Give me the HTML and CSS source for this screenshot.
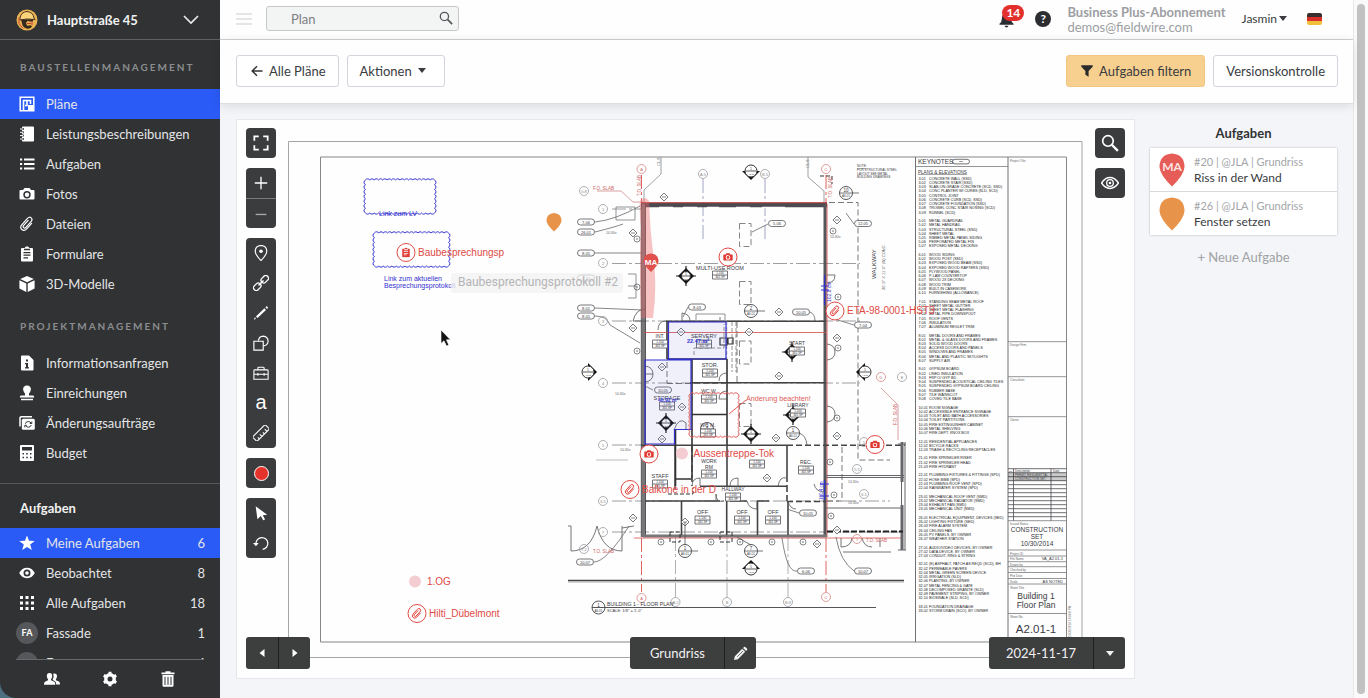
FILE: index.html
```html
<!DOCTYPE html>
<html lang="de">
<head>
<meta charset="utf-8">
<title>Grundriss – Hauptstraße 45</title>
<link rel="stylesheet" href="styles.css">
</head>
<body>
<svg class="defs" aria-hidden="true">
  <symbol id="i-clip" viewBox="0 0 16 16"><g transform="rotate(42 8 8)"><path d="M11 4.500v7.300q0 3.700-3.200 3.700t-3.200-3.700V3.500Q4.600.7 7 .7t2.400 2.800v7.700q0 1.700-1.500 1.700t-1.500-1.700V4.500" fill="none" stroke="currentColor" stroke-width="1.200" stroke-linecap="round"/></g></symbol>
  <symbol id="i-cam" viewBox="0 0 16 16"><path fill="currentColor" fill-rule="evenodd" d="M5.500 2h5L12 4h2.500q1 0 1 1v7.500q0 1-1 1h-13q-1 0-1-1V5q0-1 1-1H4zM8 5a3.700 3.700 0 1 0 0 7.400A3.700 3.700 0 0 0 8 5zm0 1.500a2.200 2.200 0 1 1 0 4.400 2.200 2.200 0 0 1 0-4.400z"/></symbol>
  <symbol id="i-board" viewBox="0 0 16 16"><path fill="currentColor" fill-rule="evenodd" d="M5.500 2 7 .5h2L10.500 2H13q1 0 1 1v11.500q0 1-1 1H3q-1 0-1-1V3q0-1 1-1zM5 2.800v1.400h6V2.800zM4.500 6v1.200h7V6zm0 2.600v1.200h7V8.600zm0 2.600v1.200H9v-1.200z"/></symbol>
  <symbol id="i-mag" viewBox="0 0 16 16"><circle cx="6.200" cy="6.200" r="4.700" fill="none" stroke="currentColor" stroke-width="1.500"/><path d="m9.700 9.700 5.300 5.300" stroke="currentColor" stroke-width="2"/></symbol>
  <symbol id="i-pencil" viewBox="0 0 16 16"><path fill="currentColor" d="M1 15l1-4.200L9.800 3 13 6.200 5.200 14zM10.700 2.100l1.100-1.100q.7-.6 1.400 0L15 2.800q.6.700 0 1.400l-1.100 1.100z"/><path d="m4.500 11.500 6-6" stroke="#3d3e3e" stroke-width=".8"/></symbol>
</svg>

<div class="app">
  <nav class="sidebar" aria-label="Projekt">
    <button class="project">
      <svg class="logo" viewBox="0 0 22 22"><circle cx="11" cy="11" r="10.500" fill="#e9b354"/><path d="M4 9q1-6 7-6.500Q17 3 18 9l1 1.500-8-.5-7 1z" fill="#fad37a" stroke="#4a3420" stroke-width="1"/><path d="M5 10.500h12v2h-4l-1-1-2 2.300 1 3 4-.5 1 1.500q-3 3-6 1.500-3.500-1-4-5z" fill="#34291f"/><path d="M3 8.500v6l4 5M11 14.500h4M16 12v4" stroke="#c2452d" fill="none"/></svg>
      <span>Hauptstraße 45</span>
      <svg class="chev" viewBox="0 0 16 10"><path d="m1 1 7 7 7-7" fill="none" stroke="#eee" stroke-width="1.600"/></svg>
    </button>
    <h2 class="group-label">BAUSTELLENMANAGEMENT</h2>
    <ul class="menu">
      <li><a class="active" href="#"><svg viewBox="0 0 16 16"><path d="M1.200 1.200h13.600v13.600H1.200z" fill="none" stroke="#fff" stroke-width="1.500"/><path d="M4.500 14V4.500h7V8M8 4.500v5H6" fill="none" stroke="#fff" stroke-width="1.600"/><path d="M9 9h5v5H9z" fill="#fff"/></svg><span>Pläne</span></a></li>
      <li><a href="#"><svg viewBox="0 0 16 16"><path d="M4 .5h10q1 0 1 1v13q0 1-1 1H4q-1 0-1-1v-13q0-1 1-1z" fill="#fff"/><path d="M.8 3h4M.8 6.300h4M.8 9.600h4M.8 13h4" stroke="#303234" stroke-width="2"/><path d="M1 3h3M1 6.300h3M1 9.600h3M1 13h3" stroke="#fff"/></svg><span>Leistungsbeschreibungen</span></a></li>
      <li><a href="#"><svg viewBox="0 0 16 16"><path d="M5 3.500h10.500M5 8h10.500M5 12.500h10.500M1 3.500h2.200M1 8h2.200M1 12.500h2.200" stroke="#fff" stroke-width="2"/></svg><span>Aufgaben</span></a></li>
      <li><a href="#"><svg><use href="#i-cam"/></svg><span>Fotos</span></a></li>
      <li><a href="#"><svg><use href="#i-clip"/></svg><span>Dateien</span></a></li>
      <li><a href="#"><svg><use href="#i-board"/></svg><span>Formulare</span></a></li>
      <li><a href="#"><svg viewBox="0 0 16 16"><path fill="#fff" d="m8 0 6.800 3L8 6.200 1.200 3zM.4 4.200 7.300 7.400V16L.4 12.600zM15.600 4.200v8.400L8.700 16V7.400z"/></svg><span>3D-Modelle</span></a></li>
    </ul>
    <h2 class="group-label">PROJEKTMANAGEMENT</h2>
    <ul class="menu">
      <li><a href="#"><svg viewBox="0 0 16 16"><path fill="#fff" fill-rule="evenodd" d="M3 .5h7L14.500 5v9.500q0 1-1 1H3q-1 0-1-1v-13q0-1 1-1zM7 4.500v2h2v-2zM6 8v1.300h1v3H6v1.200h4v-1.200H9V8z"/></svg><span>Informationsanfragen</span></a></li>
      <li><a href="#"><svg viewBox="0 0 16 16"><path fill="#fff" d="M8 .5q4 .3 3.900 4Q11.500 7 10 8.500v2h4q1.200.2 1.200 2H.8q0-1.800 1.200-2h4v-2Q4.500 7 4.100 4.500 4 .8 8 .5zM2 13.700h12v1.600H2z"/></svg><span>Einreichungen</span></a></li>
      <li><a href="#"><svg viewBox="0 0 16 16"><path d="M1 11.500V3q0-1.300 1.300-1.300H13" fill="none" stroke="#fff" stroke-width="1.500"/><rect x="2.800" y="3.800" width="13" height="11" rx="1.500" fill="#fff"/><path d="M6.300 8.700q.8-2.200 3-2.200 1.800 0 2.700 1.600M12.300 10q-.8 2.200-3 2.200-1.800 0-2.700-1.600M12.800 6.500v2h-2M5.800 12.300v-2h2" fill="none" stroke="#303234"/></svg><span>Änderungsaufträge</span></a></li>
      <li><a href="#"><svg viewBox="0 0 16 16"><path fill="#fff" fill-rule="evenodd" d="M2 0h12q1 0 1 1v14q0 1-1 1H2q-1 0-1-1V1q0-1 1-1zM3 2v3.500h10V2zM3.500 8v1.500H5V8zm3.700 0v1.500h1.600V8zM11 8v1.500h1.500V8zm-7.500 3.700v1.500H5v-1.500zm3.700 0v1.500h1.600v-1.500zm3.800 0v1.500h1.500v-1.500z"/></svg><span>Budget</span></a></li>
    </ul>
    <h2 class="tasks-title">Aufgaben</h2>
    <ul class="menu filters">
      <li><a class="active" href="#"><svg viewBox="0 0 16 16"><path fill="#fff" d="m8 .5 2 5.300 5.700.2-4.500 3.500 1.600 5.500L8 11.900 3.200 15l1.600-5.500L.3 6 6 5.800z"/></svg><span>Meine Aufgaben</span><b>6</b></a></li>
      <li><a href="#"><svg viewBox="0 0 16 16"><path fill="#fff" fill-rule="evenodd" d="M.2 8Q3 2.800 8 2.800T15.800 8Q13 13.200 8 13.200T.2 8zM8 4.500a3.500 3.500 0 1 0 0 7 3.500 3.500 0 0 0 0-7z"/><circle cx="8" cy="8" r="1.800" fill="#fff"/></svg><span>Beobachtet</span><b>8</b></a></li>
      <li><a href="#"><svg viewBox="0 0 16 16"><path stroke="#fff" stroke-width="3" stroke-dasharray="3 2.500" d="M1 2.500h14M1 8h14M1 13.500h14"/></svg><span>Alle Aufgaben</span><b>18</b></a></li>
      <li><a href="#"><i class="avatar">FA</i><span>Fassade</span><b>1</b></a></li>
      <li><a href="#"><i class="avatar">FE</i><span>Fenster</span><b>4</b></a></li>
    </ul>
    <div class="side-foot">
      <button aria-label="Personen"><svg viewBox="0 0 16 16"><path fill="#fff" d="M5.500 2Q8.300 2 8.200 5 8 7.300 7 8.300v1l3.300 1.400q1 .5 1 3H0q0-2.500 1-3l3-1.400v-1Q3 7.300 2.800 5q0-3 2.700-3zM10.500 2.500Q13 2.500 13 5.300q-.2 2-1.100 3v1l3 1.200q1.100.5 1.100 3h-3.700q0-2.800-1.700-3.600l-1.900-.8V8.500Q9.700 7 9.600 4.700 9.500 3.400 9 2.700z"/></svg></button>
      <button aria-label="Einstellungen"><svg viewBox="0 0 16 16"><circle cx="8" cy="8" r="4.200" fill="none" stroke="#fff" stroke-width="3.400"/><path d="M8 .8v3M8 12.200v3M1.800 4.400l2.500 1.500M11.700 10.100l2.500 1.500M1.800 11.600l2.500-1.500M11.700 5.900l2.500-1.500" stroke="#fff" stroke-width="3"/></svg></button>
      <button aria-label="Papierkorb"><svg viewBox="0 0 16 16"><path fill="#fff" fill-rule="evenodd" d="M5.500 1.500V.3h5v1.200h4v1.700h-13V1.500zM2.500 4h11v10.500q0 1.200-1.200 1.200H3.700q-1.200 0-1.200-1.200zm2 1.800V14h1V5.800zm3 0V14h1V5.800zm3 0V14h1V5.800z"/></svg></button>
    </div>
  </nav>

  <div class="main">
    <header class="topbar">
      <button class="burger" aria-label="Menü"><svg viewBox="0 0 16 12"><path d="M0 1h16M0 6h16M0 11h16" stroke="#dcdde0" stroke-width="1.500"/></svg></button>
      <label class="search"><input type="text" placeholder="Plan" aria-label="Plan suchen"><svg><use href="#i-mag"/></svg></label>
      <div class="account">
        <button class="bell" aria-label="Benachrichtigungen"><svg viewBox="0 0 16 16"><path fill="#292c30" d="M8 1q4.500.6 4.600 5.500 0 3.500 2.400 5.300v1H1v-1q2.400-1.800 2.400-5.300Q3.500 1.600 8 1zM6 13.800h4q-.4 1.800-2 1.800t-2-1.800z"/></svg><span class="badge">14</span></button>
        <button class="help" aria-label="Hilfe">?</button>
        <div class="plan-info"><strong>Business Plus-Abonnement</strong><span>demos@fieldwire.com</span></div>
        <button class="user">Jasmin<i class="caret"></i></button>
        <span class="flag" role="img" aria-label="Deutsch"></span>
      </div>
    </header>
    <div class="toolbar">
      <a class="btn" href="#"><svg viewBox="0 0 12 12"><path d="M11.500 6H1.500M6 1.200 1.200 6 6 10.800" fill="none" stroke="#333" stroke-width="1.500"/></svg>Alle Pläne</a>
      <button class="btn">Aktionen<i class="caret"></i></button>
      <button class="btn filter"><svg viewBox="0 0 12 12"><path d="M.3.300h11.400v1.500L7.600 6v5.800L4.400 9.800V6L.3 1.800z" fill="#2b2b2b"/></svg>Aufgaben filtern</button>
      <button class="btn">Versionskontrolle</button>
    </div>
    <div class="content">
      <main class="viewer">
        <svg class="sheet" id="sheet" viewBox="237 120 897 558" role="img" aria-label="Grundriss"></svg>
        <div class="tools left">
          <div class="pad"><button aria-label="Vollbild"><svg viewBox="0 0 18 18"><path d="M1.500 6.500v-5h5M11.500 1.500h5v5M16.500 11.500v5h-5M6.500 16.500h-5v-5" fill="none" stroke="#fff" stroke-width="2"/></svg></button></div>
          <div class="pad split"><button aria-label="Vergrößern"><svg viewBox="0 0 18 18"><path d="M2 9h14M9 2v14" stroke="#fff" stroke-width="1.500"/></svg></button><button aria-label="Verkleinern"><svg viewBox="0 0 18 18"><path d="M3 9.500h12" stroke="#aaa" stroke-width="1.500"/></svg></button></div>
          <div class="pad">
            <button aria-label="Aufgabe"><svg viewBox="0 0 18 18"><path d="M9 .5Q2.500 1 2.500 7.300 3 11.500 9 17.500q6-6 6.500-10.200Q15.500 1 9 .5z" fill="none" stroke="#fff" stroke-width="1.300"/><circle cx="9" cy="7" r="2" fill="#fff"/></svg></button>
            <button aria-label="Verknüpfung"><svg viewBox="0 0 18 18"><g fill="none" stroke="#fff" stroke-width="1.500" transform="rotate(-45 9 9)"><rect x="-1.500" y="6" width="9" height="6" rx="2.500"/><rect x="10.500" y="6" width="9" height="6" rx="2.500"/><path d="M5 9h8"/></g></svg></button>
            <button aria-label="Stift"><svg viewBox="0 0 18 18"><path d="m1 17 1-3.300L3.500 15zM3.300 12.800 12.800 3.700l1.800 1.800-9.500 9.200zM14 2.600l1.200-1.100q1.800.2 1.600 1.900l-1.100 1z" fill="#fff"/></svg></button>
            <button aria-label="Form"><svg viewBox="0 0 18 18"><path d="M6 6.500Q6.800 1.500 11.500 1.300 16.800 1.800 17 7q-.3 4.500-5 5.300" fill="none" stroke="#fff" stroke-width="1.300"/><path d="M1 7h10.500v10H1z" fill="none" stroke="#fff" stroke-width="1.300"/></svg></button>
            <button aria-label="Werkzeug"><svg viewBox="0 0 18 18"><path d="M2 5.500h14q1 0 1 1V16H1V6.500q0-1 1-1zM5.500 5.500v-2q0-1 1-1h5q1 0 1 1v2M1 10.500h16M5.500 9v3M12.500 9v3" fill="none" stroke="#fff" stroke-width="1.200"/></svg></button>
            <button class="letter" aria-label="Text">a</button>
            <button aria-label="Messen"><svg viewBox="0 0 18 18"><g transform="rotate(-45 9 9)" fill="none" stroke="#fff" stroke-width="1.200"><rect x="-1" y="5.500" width="20" height="7" rx=".8"/><path d="M3 12.500V10M7 12.500V9M11 12.500V10M15 12.500V9"/></g></svg></button>
          </div>
          <div class="pad"><button aria-label="Farbe"><i class="dot"></i></button></div>
          <div class="pad">
            <button aria-label="Auswahl"><svg viewBox="0 0 18 18"><path d="m3 1.500 13 9.500-5 .5 2.600 4.700-2.200 1-2.500-4.800L5 16z" fill="#fff"/></svg></button>
            <button aria-label="Rückgängig"><svg viewBox="0 0 18 18"><path d="M3.300 9.500a6.700 6.700 0 1 1 7.500 6.700" fill="none" stroke="#fff" stroke-width="1.400"/><path d="M0 9h6.500l-3.200 3.700z" fill="#fff"/></svg></button>
          </div>
        </div>
        <div class="tools right">
          <div class="pad"><button aria-label="Suchen"><svg><use href="#i-mag"/></svg></button></div>
          <div class="pad"><button aria-label="Ebenen"><svg viewBox="0 0 18 18"><path d="M.5 9Q4 3.500 9 3.500T17.500 9Q14 14.500 9 14.500T.5 9z" fill="none" stroke="#fff" stroke-width="1.500"/><circle cx="9" cy="9" r="3.300" fill="none" stroke="#fff" stroke-width="1.300"/><circle cx="9" cy="9" r="1.300" fill="#fff"/></svg></button></div>
        </div>
        <div class="bar pager"><button aria-label="Zurück"><svg viewBox="0 0 10 10"><path d="M7.500 1v8L2.500 5z" fill="#fff"/></svg></button><button aria-label="Weiter"><svg viewBox="0 0 10 10"><path d="M2.500 1v8l5-4z" fill="#fff"/></svg></button></div>
        <div class="bar name"><button class="wide">Grundriss</button><button aria-label="Bearbeiten"><svg class="big"><use href="#i-pencil"/></svg></button></div>
        <div class="bar date"><button class="wide">2024-11-17</button><button aria-label="Version wählen"><i class="caret"></i></button></div>
      </main>
      <aside class="tasks">
        <h2>Aufgaben</h2>
        <ul>
          <li><a href="#"><svg class="pin" viewBox="0 0 26 34"><path d="M13 .5Q25.500 1.500 25.500 14 25 22 13 33.500 1 22 .5 14 .5 1.500 13 .5z" fill="#e65c57"/><text x="13" y="18" text-anchor="middle">MA</text></svg><span><small>#20 | @JLA | Grundriss</small>Riss in der Wand</span></a></li>
          <li><a href="#"><svg class="pin" viewBox="0 0 26 34"><path d="M13 .5Q25.500 1.500 25.500 14 25 22 13 33.500 1 22 .5 14 .5 1.500 13 .5z" fill="#e8934a"/></svg><span><small>#26 | @JLA | Grundriss</small>Fenster setzen</span></a></li>
        </ul>
        <button class="new">+ Neue Aufgabe</button>
      </aside>
    </div>
  </div>
  <div class="gutter"><div class="thumb"></div></div>
</div>
<script src="plan.js"></script>
</body>
</html>
```
FILE: styles.css
```css
* { box-sizing: border-box; }
body { margin: 0; font: 13px/20px Lato, "Open Sans", sans-serif; color: #3a3c3f; background: #4d6f80; }
button { font: inherit; color: inherit; border: 0; background: none; padding: 0; display: flex; align-items: center; justify-content: center; }
a { color: inherit; text-decoration: none; }
ul { list-style: none; margin: 0; padding: 0; }
h2 { margin: 0; font-size: 13px; line-height: 20px; }
i { font-style: normal; }
.defs { display: none; }
.app { display: flex; height: 100vh; }
.caret { display: inline-block; border: 4px solid transparent; border-top: 5px solid currentColor; border-bottom: 0; }

.sidebar { width: 220px; flex: none; display: flex; flex-direction: column; background: #303234; color: #e4e5e6; border-bottom-left-radius: 16px; overflow: hidden; }
.project { height: 40px; flex: none; border-bottom: 1px solid #606264; padding: 0 21px 0 16px; gap: 9px; font-weight: 700; color: #f2f2f2; }
.project span { flex: 1; text-align: left; }
.logo { width: 22px; height: 22px; }
.chev { width: 16px; height: 10px; }
.group-label { height: 49px; flex: none; padding: 17px 20px 0; font-size: 10px; line-height: 20px; letter-spacing: 2px; color: #8b8d8f; }
.menu a { display: flex; align-items: center; height: 30px; padding: 0 15px 0 16px; gap: 8px; }
.menu svg { width: 16px; height: 16px; margin: 0 3px; flex: none; color: #fff; }
.menu span { flex: 1; }
.menu b { font-weight: 400; }
.menu a.active { background: #2a5bf6; }
.tasks-title { flex: none; margin-top: 15px; border-top: 1px solid #55575a; height: 45px; padding: 14px 20px 0; color: #f2f2f2; }
.filters { flex: 1; overflow: hidden; min-height: 0; }
.avatar { width: 22px; height: 22px; border-radius: 50%; background: #55575a; font-size: 9px; line-height: 22px; text-align: center; font-weight: 700; color: #fff; }
.side-foot { flex: none; height: 39px; margin: 0 16px; border-top: 1px solid #66686a; display: flex; justify-content: space-around; padding: 0 7px; }
.side-foot svg { width: 16px; height: 16px; }

.main { flex: 1; min-width: 0; display: flex; flex-direction: column; background: #f4f5f8; }
.topbar { height: 40px; flex: none; display: flex; align-items: center; gap: 14px; padding: 0 31px 2px 16px; background: #fefefe; border-bottom: 1px solid #cfd1d4; }
.burger svg { width: 16px; height: 12px; }
.search { width: 193px; position: relative; }
.search input { display: block; width: 100%; height: 25px; border: 1px solid #c6c7ca; border-radius: 3px; background: #f3f4f4; padding: 0 32px 0 24px; font: inherit; }
.search input::placeholder { color: #7d7f82; opacity: 1; }
.search svg { position: absolute; right: 6px; top: 5px; width: 14px; height: 14px; color: #55575a; }
.account { margin-left: auto; display: flex; align-items: center; gap: 16px; }
.bell { position: relative; }
.bell svg { width: 17px; height: 16px; display: block; margin-top: 2px; }
.badge { position: absolute; left: 4px; top: -5px; background: #e2312d; color: #fff; font-weight: 700; font-size: 12px; line-height: 16px; border-radius: 8px; padding: 0 4px; }
.help { width: 16px; height: 16px; margin-left: 4px; border-radius: 50%; background: #2b2d31; color: #fff; font-weight: 700; font-size: 12px; line-height: 16px; }
.plan-info { display: flex; flex-direction: column; line-height: 15px; color: #9d9fa3; padding-top: 2px; }
.user { font-size: 12px; gap: 2px; }
.flag { width: 15px; height: 12px; margin-left: 4px; border-radius: 2px; background: linear-gradient(#3a2f2f 33%, #d8302a 33% 67%, #f0bf3c 67%); }
.toolbar { height: 64px; flex: none; display: flex; align-items: center; gap: 8px; padding: 0 15px 2px 16px; background: #fefefe; border-bottom: 1px solid #dcdde0; box-shadow: 0 2px 10px #0000001c; position: relative; }
.btn { display: flex; align-items: center; gap: 6px; height: 32px; padding: 0 12px; border: 1px solid #d3d4dc; border-radius: 3px; background: #fff; }
a.btn { padding-left: 14px; }
.btn svg { width: 12px; height: 12px; }
.btn .caret { margin: 0 6px 0 0; }
.filter { margin-left: auto; background: #f7cf8f; border-color: #f2c680; padding: 0 13px 0 14px; }

.content { flex: 1; min-height: 0; display: flex; gap: 16px; padding: 16px 16px 20px 17px; }
.viewer { flex: 1; min-width: 0; position: relative; background: #fefefe; box-shadow: 0 0 0 1px #e6e7ea; }
.sheet { display: block; width: 100%; height: 100%; font-family: "Liberation Sans", Arial, sans-serif; }
.tools { position: absolute; top: 8px; display: flex; flex-direction: column; gap: 10px; }
.left { left: 9px; }
.right { right: 9px; }
.pad { background: #3b3c3e; border-radius: 4px; }
.pad button { width: 30px; height: 30px; color: #fff; }
.pad svg { width: 16px; height: 16px; }
.right svg { width: 18px; height: 18px; }
.split button + button { border-top: 1px solid #77797b; }
.pad .letter { font: 20px/20px "Liberation Sans", Arial, sans-serif; padding-bottom: 3px; }
.dot { width: 15px; height: 15px; border-radius: 50%; background: #e5322b; border: 1px solid #fff; }
.bar { position: absolute; bottom: 9px; display: flex; background: #3d3e3e; color: #f1f1f1; border-radius: 3px; }
.bar button { width: 32px; height: 32px; }
.bar button + button { border-left: 1px solid #1f2020; }
.bar .wide { width: auto; flex: 1; }
.bar svg { width: 10px; height: 10px; }
.bar svg.big { width: 15px; height: 15px; }
.pager { left: 9px; }
.name { left: 51%; width: 126px; margin-left: -64px; }
.date { right: 9px; width: 136px; }

.tasks { width: 187px; flex: none; display: flex; flex-direction: column; padding-top: 3px; }
.tasks h2 { text-align: center; color: #303234; }
.tasks ul { margin: 5px 0 12px; background: #fff; box-shadow: 0 0 2px #0004; }
.tasks li + li { border-top: 1px solid #d8d9dd; }
.tasks li a { display: flex; align-items: center; gap: 9px; height: 43px; padding-left: 9px; font-size: 12px; line-height: 17px; }
.tasks small { display: block; font-size: 11px; line-height: 15px; color: #a3a5a8; }
.pin { width: 26px; height: 34px; }
.pin text { font-size: 12px; font-weight: 700; fill: #fbe3e2; }
.new { color: #a0a2a5; }
.gutter { width: 15px; flex: none; background: #fafafa; border-left: 1px solid #e8e8e8; padding: 4px 3px; }
.thumb { height: 100%; width: 8px; border-radius: 4px; background: #c2c2c2; }
```
FILE: plan.js
```js
const sheet = document.getElementById('sheet');
const out = [];
const DK = '#3a3a3e', GR = '#9b9ca1', RD = '#d9534f', BL = '#3330d0';

const path = (d, stroke = DK, w = 1, extra = '') =>
  out.push(`<path d="${d}" fill="none" stroke="${stroke}" stroke-width="${w}" ${extra}/>`);
const text = (x, y, s, size, fill = DK, extra = '') =>
  out.push(`<text x="${x}" y="${y}" font-size="${size}" fill="${fill}" ${extra}>${s}</text>`);
const mid = 'text-anchor="middle"';
const circle = (x, y, r, stroke = GR, w = .8, fill = 'none') =>
  out.push(`<circle cx="${x}" cy="${y}" r="${r}" fill="${fill}" stroke="${stroke}" stroke-width="${w}"/>`);
const use = (id, x, y, s, color) =>
  out.push(`<use href="#${id}" x="${x - s / 2}" y="${y - s / 2}" width="${s}" height="${s}" color="${color}"/>`);

/* sheet frames and title block */
path('M288.5 141.500H1082V657.500H288.500z', '#a4a5a9');
path('M320.500 157H1066.500V642H320.500z', '#85868a');
path('M915.500 157V642M1008 157V642', '#6f7074');
path('M915.500 166.500H1008M1008 341.700h58.500M1008 376.700h58.500M1008 416.700h58.500M1008 520.700h58.500M1008 550h58.500M1008 556h58.500M1008 561.700h58.500M1008 566.700h58.500M1008 572.500h58.500M1008 578.500h58.500M1008 584h58.500M1008 613.500h58.500', '#77787c', .8);
let rows = '';
for (let y = 468.700; y < 520; y += 4) rows += `M1008 ${y}h58.500`;
path(rows + 'M1013.500 468.700v52M1051 468.700v52', '#4a4a4e', .8);
out.push('<path d="M1008 472.700h58.500v8h-58.500z" fill="#0003"/>');
text(1009, 472, 'No.', 2.500); text(1015, 472, 'Description', 3); text(1053, 472, 'Date', 3);
text(1015, 476.300, 'PERMIT RESUBMITTAL', 3); text(1015, 480.300, 'CONSTRUCTION SET', 3);
text(918, 164, 'KEYNOTES', 6.500); path('M955 159.300h12q2.500 0 2.500 2.300t-2.500 2.300h-12q-2.500 0-2.500-2.300t2.500-2.300z', DK, .7); path('M959 161.500h4', '#888', .8);
text(918, 173.500, 'PLANS &amp; ELEVATIONS', 4.600, DK, 'text-decoration="underline"');
[[162, 'Project Title'], [346, 'Design Firm'], [381, 'Consultant'], [421, 'Owner'], [524.500, 'Issued Status'], [554.500, 'Project ID'], [560, 'File Name'], [565.500, 'Drawn by'], [571, 'Checked by'], [577, 'Plot Date'], [583, 'Scale'], [589, 'Sheet Title'], [618, 'Sheet No.']]
  .forEach(([y, s]) => text(1010, y, s, 3, '#666'));
text(1063, 560, 'VA_A2.01-1', 4, DK, 'text-anchor="end"');
text(1063, 583, 'AS NOTED', 4, DK, 'text-anchor="end"');
text(1037, 531.500, 'CONSTRUCTION', 6.500, DK, mid); text(1037, 538.500, 'SET', 6.500, DK, mid); text(1037, 546, '10/30/2014', 6.500, DK, mid);
text(1036, 599, 'Building 1', 8.500, DK, mid); text(1036, 608, 'Floor Plan', 8.500, DK, mid); text(1036, 633, 'A2.01-1', 11.500, DK, mid);
text(0, 0, '10/30/2014 1:04:08 PM', 3, '#777', 'transform="translate(1071 637) rotate(-90)"');

/* keynote legend, grouped by division */
const notes = `3.01 CONCRETE WALL (SSD)|3.02 CONCRETE STAIR (SSD)|3.03 SLAB-ON-GRADE CONCRETE (SCD, SSD)|3.04 CONC PLANTER W/ CURBS (SLD, SCD)|3.05 CONTROL JOINT|3.06 CONCRETE CURB (SCD, SSD)|3.07 CONCRETE FOUNDATION (SSD)|3.08 TROWEL CONC STAIR NOSING (SCD)|3.09 RUNNEL (SCD)||5.01 METAL GUARDRAIL|5.02 METAL HANDRAIL|5.03 STRUCTURAL STEEL (SSD)|5.04 SHEET METAL|5.05 RIBBED METAL PANEL SIDING|5.06 PERFORATED METAL FIN|5.07 EXPOSED METAL DECKING||6.01 WOOD SIDING|6.02 WOOD POST (SSD)|6.03 EXPOSED WOOD BEAM (SSD)|6.04 EXPOSED WOOD RAFTERS (SSD)|6.05 PLYWOOD PANEL|6.06 P-LAM COUNTERTOP|6.07 WOOD 2X DECKING|6.08 WOOD TRIM|6.09 BUILT-IN CASEWORK|6.10 FURNISHING (ALLOWANCE)||7.01 STANDING SEAM METAL ROOF|7.02 SHEET METAL GUTTER|7.03 SHEET METAL FLASHING|7.04 METAL PIPE DOWNSPOUT|7.05 ROOF VENTS|7.06 INSULATION|7.07 ALUMINUM REGLET TRIM||8.01 METAL DOORS AND FRAMES|8.02 METAL &amp; GLASS DOORS AND FRAMES|8.03 SOLID WOOD DOORS|8.04 ACCESS DOORS AND PANELS|8.05 WINDOWS AND FRAMES|8.06 METAL AND PLASTIC SKYLIGHTS|8.07 SUPPLY AIR||9.01 GYPSUM BOARD|9.02 LINED INSULATION|9.03 FRP O/ GYP BD|9.04 SUSPENDED ACOUSTICAL CEILING TILES|9.05 SUSPENDED GYPSUM BOARD CEILING|9.06 RUBBER BASE|9.07 TILE WAINSCOT|9.08 COVED TILE BASE||10.01 ROOM SIGNAGE|10.02 ACCESSIBLE ENTRANCE SIGNAGE|10.03 TOILET AND BATH ACCESSORIES|10.04 TOILET PARTITIONS|10.05 FIRE EXTINGUISHER CABINET|10.06 METAL SHELVING|10.07 FIRE DEPT. KNOX BOX||12.01 RESIDENTIAL APPLIANCES|12.02 BICYCLE RACKS|12.03 TRASH &amp; RECYCLING RECEPTACLES||21.01 FIRE SPRINKLER RISER|21.02 FIRE SPRINKLER HEAD|21.03 FIRE HYDRANT||22.01 PLUMBING FIXTURES &amp; FITTINGS (SPD)|22.02 HOSE BIBB (SPD)|22.03 PLUMBING ROOF VENT (SPD)|22.04 RAINWATER SYSTEM (SPD)||23.01 MECHANICAL ROOF VENT (SMD)|23.02 MECHANICAL RADIATOR (SMD)|23.04 EXHAUST FAN (SMD)|23.05 MECHANICAL UNIT (SMD)||26.01 ELECTRICAL EQUIPMENT, DEVICES (SED)|26.02 LIGHTING FIXTURE (SED)|26.03 FIRE ALARM SYSTEM|26.04 CEILING FAN|26.05 PV PANELS, BY OWNER|26.07 WEATHER STATION||27.01 AUDIO/VIDEO DEVICES, BY OWNER|27.02 DATA DEVICE, BY OWNER|27.03 CONDUIT, RING &amp; STRING||32.01 (E) ASPHALT, PATCH AS REQD (SCD), BH|32.02 PERMEABLE PAVERS|32.04 METAL GREEN SCREEN DEVICE|32.05 IRRIGATION (SLD)|32.06 PLANTING, BY OWNER|32.07 METAL FENCING &amp; GATE|32.08 DECOMPOSED GRANITE (SLD)|32.09 PAVEMENT STRIPING, BY OWNER|32.10 BIOSWALE (SLD, SCD)||33.01 FOUNDATION DRAINAGE|33.02 STORM DRAIN (SCO), BY OWNER`.split('|');
notes.forEach((n, i) => {
  if (!n) return;
  const cut = n.indexOf(' '), y = (179.600 + i * 4.240).toFixed(1);
  text(918.500, y, n.slice(0, cut), 3.700, '#222');
  text(929, y, n.slice(cut + 1), 3.700, '#222');
});

/* grid lines */
path('M612 263.500H860M612 321H860M612 383H860M612 445H645M612 501H890M612 532H900M612 209H642', '#85868a', .8, 'stroke-dasharray="14 3 3 3"');
path('M703 179V241M765 179V241', '#8a8fb8', .8, 'stroke-dasharray="14 3 3 3"');
path('M675.500 537V597M727 537V597M788 537V597', GR, .8, 'stroke-dasharray="14 3 3 3"');
path('M641.500 175V203M826 175V203M641.500 538V592M826 538V592', RD, .9, 'stroke-dasharray="14 3 3 3"');
path('M661 157v17l-17 16v13M808 157v20l16 14v12', '#77787c', .7);
path('M597 191h24l12 11h10M898 440v-35l-17-17', '#d08a88', .8);

/* walls */
path('M641 205H827', '#4c4c50', 4.500); path('M641 202.700H827', '#c43c3c', 1);
path('M659 207.500h14M683 207.500h14M707 207.500h12M736 207.500h14M762 207.500h23', '#fefefe', 1.500);
path('M643.500 204V537', '#77777a', 4); path('M641.300 204V537M645.500 204V537', '#3a3a3e', .8);
path('M825 204V537', '#55565a', 3); path('M827 204V537', '#c43c3c', .8);
path('M643 536H827', '#77777a', 3); path('M634 538H903', RD, .8);
path('M666 321.300H826M690 382.800H826M641 445.300H787', '#444', 1.500);
path('M787 445.300H905M787 501.500H826', '#444', 1.500, 'stroke-dasharray="6 3"');
path('M692 359V478M727 359V445M692 414.500h35M667 321v38M667 359h60M675.500 430v56', '#333', 1.600);
path('M675 445V489M675 479H692', '#333', 1.300);
path('M700 486.300H787M727 445v41M787 445v30M645 501H720M730 501h17M757 501h12M681.500 501v34M726.700 501v34M757.500 501v34M788 501v34', '#444', 1.600);
path('M692 445v41M787 475v26', '#444', 1.600, 'stroke-dasharray="7 3"');
path('M901.500 442V550M905 442V550M898 444h8M898 550h8M826 475.500h78M826 508h76M826 477.500h78', '#66676a', 1);
path('M902 442v40M902 505v45', '#66676a', 3);
path('M827 531.500h76', '#222', 2, 'stroke-dasharray="6 2"');
path('M726.700 321v38M732 322v50M736 322v50M694 355v-7h30v-24', '#777', .8, 'stroke-dasharray="4 2"');
path('M720 338h7v7h-7zM728 338h5v6h-5z', '#333', 1.200);
path('M739.500 223.500h11.500v23h-11.500zM739.500 281.500h11.500v23h-11.500zM739.500 341h11.500v23h-11.500zM739.500 403.500h11.500v23h-11.500z', '#777', .9, 'stroke-dasharray="6 3"');
path('M720 322v-5M737 322v61M667 383.500h60M667 362v21M829 202.500h29V460H890M842 447v54M842 501H826', '#555', .8, 'stroke-dasharray="6 3"');
path('M616 207h19v13h-19zM628 274h8v24h-8M628 286h8M696 321v-7h29v7', '#77787c', .8);
path('M644 332.500H826', '#d04a48', .8);
/* door swings */
path('M645 366q8 1 8 8h-8M645 382q8-1 8-8M827 344q8 1 8 8M827 360q8-1 8-8M827 406q8 1 8 8M827 422q8-1 8-8M827 275h8q0 8-8 8M645 321h-12q3-12 12-12M666 321q-8 0-8 9M682 321v-8q8 1 8 8M727 373q-8 0-8 8M674 430q5-14 12-7v7M727 399h-8q0-8 8-8M716 501v-7q0 9 8 7M747 501q2 8 10 8v-8M692 486q0-8 8-8v8M778 486q2-10 8-8M814 484q2 8 10 8v-8M788 501q2 8 8 8M730 486q0-8 8-8v8', '#555', .8);
path('M568 526h3v25M622 526v25M571 551q20 0 26-25 6 25 25 25M622 528l12-2M841 538v9M880 538v9M841 547q10 0 11-9M862 538q2 9 10 9M843 552h48', '#66676a', .9);
path('M568 580.500H904', '#444', 1.400); path('M568 582H904', '#999', .8);
path('M670 532h10v10h-10zM720 532h12v10h-12zM668 494h25v-6M820 176h12v8', '#333', 1, 'stroke-dasharray="4 2"');

/* callout leaders */
path('M595 222q20-2 45-16M595 232q20-5 28-8M595 253h48M595 308l48 2M595 316q12 0 15 9l30 18M768 224l-16 8M854 224l-8-11M854 325l-26-8M688 307l-5 10M810 312q5 2 5 9M653 390l-8-4M799 513l-12-4M797 571q-10 2-15-33M854 571q-14-10-18-34M594 562q12 0 35-36', '#66676a', .8);
[[586, 222, '7.06'], [586, 232, '26.01'], [586, 253, '8.05'], [586, 278, '4.10'], [586, 308, '8.01'], [586, 316, '8.05'], [777, 223.500, '5.06'], [863, 223.500, '12.05'], [697, 307, '8.03'], [801, 312, '10.05'], [863, 325, '7.04'], [663, 390, '10.05'], [808, 513, '10.05'], [806, 571, '6.06'], [863, 571, '10.07'], [585, 562, '10.07']]
  .forEach(([x, y, s]) => { out.push(`<rect x="${x - 8.500}" y="${y - 3}" width="17" height="6" rx="3" fill="#fefefe" stroke="#55565a" stroke-width=".8"/>`); text(x, y + 1.500, s, 4, DK, mid); });
[[664, 197], [633, 233], [779, 312], [837, 220], [681, 332], [749, 332], [779, 376], [662, 367], [682, 407], [662, 439], [776, 438], [837, 338], [837, 436], [633, 328], [767, 478], [633, 518], [685, 522], [817, 544], [837, 530]]
  .forEach(([x, y]) => { out.push(`<path d="M${x} ${y - 4}l4 4-4 4-4-4z" fill="#fefefe" stroke="#55565a" stroke-width=".8"/><path d="M${x - 2} ${y}h4" stroke="#888"/>`); });
[[637, 239], [637, 287], [833, 231], [838, 297], [637, 351], [838, 348], [837, 418], [830, 462], [661, 542], [711, 542], [740, 542], [772, 542], [803, 542], [834, 495], [831, 516]]
  .forEach(([x, y]) => { circle(x, y, 3, '#66676a'); path(`M${x - 1} ${y}h2`, '#777'); });
[[603, 209, '1'], [603, 263, '2'], [584, 191, '0.8'], [703, 174, 'A.5'], [765, 174, 'B.5'], [603, 321, '3'], [603, 383, '4'], [603, 445, '5'], [603, 501, '6.5'], [603, 532, '7'], [584, 549, '7.2'], [864, 494, '6.1'], [902, 377, 'E'], [857, 469, '5.5'], [864, 442, '5'], [675.500, 602, 'A.2'], [727, 602, 'B'], [788, 602, 'B.8']]
  .forEach(([x, y, s]) => { circle(x, y, 4.500); text(x, y + 1.500, s, 4, '#888', mid); });
[[641.500, 169, 'A'], [826, 169, 'C'], [881, 377, 'D'], [641.500, 598, 'A'], [826, 597, 'C'], [857, 539, '7']]
  .forEach(([x, y, s]) => { circle(x, y, 4.500, '#d58583'); text(x, y + 1.500, s, 4, '#c66', mid); });
[[751, 171, 1], [686, 276, 4], [792, 352, 4], [793, 415, 4], [666, 423, 4], [751, 434, 4], [588, 372, 2], [865, 372, 3], [751, 569, 5]]
  .forEach(([x, y, n]) => {
    const d = { 1: `M${x - 9} ${y}h18l-9 9z`, 2: `M${x} ${y - 9}v18l9-9z`, 3: `M${x} ${y - 9}v18l-9-9z`, 5: `M${x - 9} ${y}h18l-9-9z`, 4: `M${x} ${y - 8}l8 8-8 8-8-8z` }[n];
    out.push(`<path d="${d}" fill="#111"/>`);
    circle(x, y, n === 4 ? 4.500 : 6, '#333', 1, '#fefefe');
    path(`M${x - 5} ${y}h10`, '#333', .8); text(x, y - 1, '1', 3.500, DK, mid); text(x, y + 3.500, 'A3.01', 2.500, DK, mid);
    if (n === 4) path(`M${x} ${y - 10}v4M${x} ${y + 10}v-4M${x - 10} ${y}h4M${x + 10} ${y}h-4`, '#222', 1.200);
  });
[[846, 193, '10'], [751, 311, '2'], [793, 433, '1'], [707, 429, '3'], [685, 551, '1'], [751, 551, '7'], [598.500, 607.500, '1']]
  .forEach(([x, y, s]) => { circle(x, y, 6.500, '#55565a', 1); path(`M${x - 6.500} ${y}h13`, '#555', .8); text(x, y - 1, s, 4.500, DK, mid); text(x, y + 4, 'A6.01', 3, DK, mid); });
path('M852 193h7M757 311h8M692 551h6M757 551h6M685 545V522M751 545l-14-8M799 433q7 2 8 12', '#555', .8);

/* rooms: name centre, name size, tag top */
[[720, 269.500, 'MULTI-USE ROOM', 5.500, 271], [660, 338, 'INT.', 5, 340], [704, 338, 'SERVERY', 5.500, 340], [710, 367, 'STOR.', 5.500, 369], [797, 345, 'START', 5, 347], [798, 407, 'LIBRARY', 5, 409], [667, 400, 'STORAGE', 5.500, 402], [709, 393, 'WC W.', 5, 395], [708, 427, 'WC M.', 5, 429], [709, 463, 'WORK', 5, 470], [709, 468.500, 'RM', 5, 470], [806, 464, 'REC.', 5, 466], [660, 478, 'STAFF', 5.500, 480], [702.500, 514, 'OFF', 5.500, 516], [742, 514, 'OFF', 5.500, 516], [773, 514, 'OFF', 5.500, 516], [733, 491, 'HALLWAY', 5, 493], [757, 0, '', 5, 460]]
  .forEach(([x, y, s, f, t]) => {
    if (s) text(x, y, s, f, DK, mid);
    if (s === 'WORK') return;
    out.push(`<path d="M${x - 7.500} ${t}h15v8h-15zM${x - 7.500} ${t + 4}h15" fill="#fefefe" stroke="#55565a" stroke-width=".8"/>`);
    text(x, t + 3.200, '1.100', 3, DK, mid); text(x, t + 7.200, '345 SF', 3, DK, mid);
  });
text(0, 0, 'WALKWAY', 6, DK, 'transform="translate(876 279) rotate(-90)"');
text(0, 0, '20\'-9" X 11\'-0" (N) CONC.', 4, '#555', 'transform="translate(885 290) rotate(-90)"');
text(0, 0, 'T.O. SLAB', 4.500, '#c66', 'transform="translate(641 196) rotate(-90)"');
text(0, 0, 'T.O. SLAB', 4.500, '#c66', 'transform="translate(832 198) rotate(-90)"');
text(0, 0, 'F.O. SLAB', 4.500, '#c66', 'transform="translate(897 425) rotate(-90)"');
text(0, 0, 'CL.8', 4, '#777', 'transform="translate(660 166) rotate(-90)"');
text(0, 0, 'CL.8', 4, '#777', 'transform="translate(809 168) rotate(-90)"');
text(593, 190, 'F.O. SLAB', 4.500, '#c66'); text(593, 553, 'T.O. SLAB', 4.500, '#c66'); text(866, 542, 'T.O. SLAB', 4.500, '#c66');
text(857, 167, 'NOTE:', 3.200, DK, 'text-decoration="underline"'); text(857, 170.800, 'FOR STRUCTURAL STEEL', 3.200); text(857, 174.600, 'LAYOUT SEE METAL', 3.200); text(857, 178.400, 'BUILDING DRAWINGS', 3.200);
[[606, 234], [830, 238], [615, 395], [620, 451], [848, 483], [848, 504]].forEach(([x, y]) => text(x, y, '10.30±', 3.500, '#666'));
path('M596 460h32', '#bbb', 1);
path('M592 607.500H876', '#55565a', 1);
text(607, 606, 'BUILDING 1 - FLOOR PLAN', 5.200); text(607, 612, 'SCALE: 1/8" = 1\'-0"', 4);

/* measured areas */
out.push(`<path d="M668.500 322h57.500v37h-57.500zM645 360h46v69.500h-16.500V444H645z" fill="#6060e016" stroke="${BL}" stroke-width="1.200"/>`);
text(698, 343, '22.47 m²', 5.500, BL, mid + ' font-weight="700"'); text(668, 402, '40.92 m²', 5, BL, mid + ' font-weight="700"');
path('M824.500 275v30M821 286h8M821 290h8M824.500 480v20M820 484h9M820 496h9', BL, 1.200);
text(0, 0, '102.8 cm', 5, BL, 'transform="translate(831 302) rotate(-90)"'); text(0, 0, '100.4 cm', 4.500, BL, 'transform="translate(823 500) rotate(-90)"');

/* revision clouds */
const cloud = (x, y, w, h, color) => {
  const nx = Math.round(w / 4.400), ny = Math.round(h / 4.400), sx = w / nx, sy = h / ny;
  const arc = (dx, dy) => `a2.600 2.600 0 0 1 ${dx.toFixed(2)} ${dy.toFixed(2)}`;
  path(`M${x} ${y}` + arc(sx, 0).repeat(nx) + arc(0, sy).repeat(ny) + arc(-sx, 0).repeat(nx) + arc(0, -sy).repeat(ny), color, 1);
};
cloud(365.500, 180, 69, 33, BL); cloud(374.500, 233, 74, 33, BL); cloud(690, 394, 48, 42, '#e05a56');
text(379, 215.500, 'Link zum LV', 7, BL);
text(384, 281, 'Link zum aktuellen', 7, BL); text(384, 288, 'Besprechungsprotokoll', 7, BL);
text(746, 401, 'Änderung beachten!', 7.200, '#e05a56'); path('M746 400l-17 14', '#e05a56', 1);
out.push('<path d="M640 201q5-6 9 0 1 30 5 60 3 30-1 57h-12q-2-60 0-90-2-20-1-27z" fill="#ee6a6a66"/>');
out.push('<g fill="#f4cdd2"><circle cx="682" cy="453.500" r="6"/><circle cx="415" cy="581.500" r="6"/></g>');

/* linked items and pins */
const item = (x, y, icon, s) => { circle(x, y, 9, '#e04a45', 1, '#fefefe'); use(icon, x, y, s, '#e03a34'); };
item(728, 257, 'i-cam', 10); item(649, 454, 'i-cam', 10); item(875, 444.500, 'i-cam', 10);
item(835, 311, 'i-clip', 12); item(630, 489.500, 'i-clip', 12); item(417, 613.500, 'i-clip', 12); item(406, 252.500, 'i-board', 10);
[[418, 256, 'Baubesprechungsp', 10], [847, 314, 'ETA-98-0001-HST3', 10], [693.500, 457, 'Aussentreppe-Tok', 10], [642, 493, 'Balkone in der D', 10], [427, 585, '1.OG', 10], [429, 617, 'Hilti_Dübelmont', 10]]
  .forEach(([x, y, s, f]) => text(x, y, s, f, '#e04a45'));
const pin = (x, y, c) => out.push(`<path d="M${x} ${y - 9}q7.500.500 7.500 8-.500 4-7.500 10.500-7-6.500-7.500-10.500 0-7.500 7.500-8z" fill="${c}"/>`);
pin(554, 222, '#e8934a'); pin(651, 262.500, '#e0504c'); text(651, 265, 'MA', 8, '#fff', mid + ' font-weight="700"');
out.push('<rect x="451" y="273" width="172" height="20" rx="3" fill="#f2f2f2" fill-opacity=".75"/>');
text(458, 286, 'Baubesprechungsprotokoll #2', 12, '#b4b4b6', 'font-family="Roboto"');
out.push('<path d="M441 330v13.500l3-2.700 2.500 5.200 2.300-1-2.400-5.200h4z" fill="#111" stroke="#fff" stroke-width=".6"/>');

sheet.innerHTML = out.join('');
```
